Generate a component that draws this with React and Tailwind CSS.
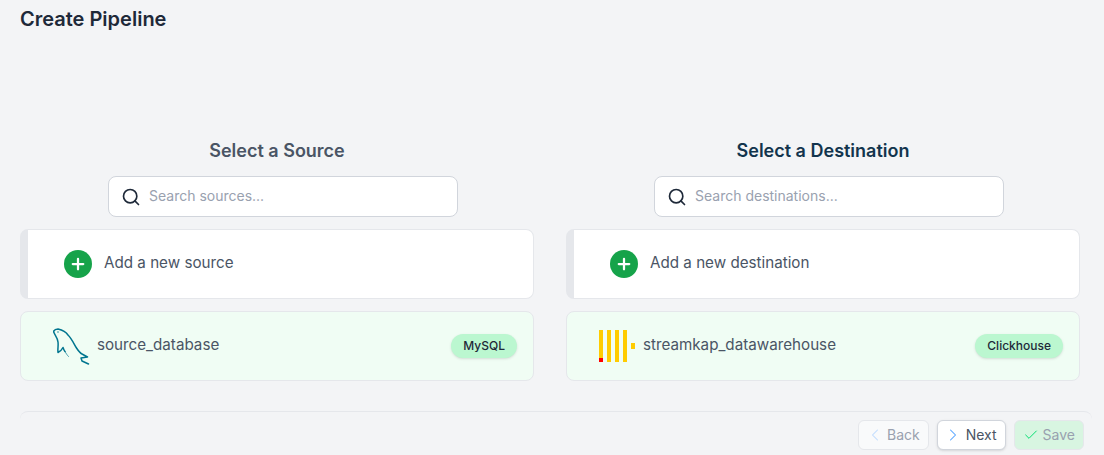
import React from 'react';
import { Search, Plus, ChevronLeft, ChevronRight, Check } from 'lucide-react';

const MysqlIcon = () => (
  <svg width="38" height="38" viewBox="0 0 38 38" fill="none" stroke="#00758f" strokeLinecap="round" strokeLinejoin="round">
    <path strokeWidth="1.5" d="M0.500 4.500C1.500 2.500 3 2 5 2c4 1 8 3 10 6 4 4 6.500 10 8.500 13 2 3 3.500 5 5.500 6l5.500 3-6.500 1 1 3 6.500 3" />
    <path strokeWidth="1.500" d="M0.500 4.500c1 3.500 4 5.500 4.500 10.500.5 4-.5 7 0 10.500 2-1 4-3 5-5 .5 1.500 1 3 2 4" />
    <path strokeWidth="0.700" d="M12 24.500c1 2 2.500 4 3.500 5" />
    <circle cx="5" cy="5" r="0.700" fill="#00758f" stroke="none" />
  </svg>
);

const ClickhouseIcon = () => (
  <svg width="38" height="32" viewBox="0 0 38 32" className="block">
    <rect x="0" y="0" width="4" height="32" fill="#fc0" />
    <rect x="8" y="0" width="4" height="32" fill="#fc0" />
    <rect x="16" y="0" width="4" height="32" fill="#fc0" />
    <rect x="24" y="0" width="4" height="32" fill="#fc0" />
    <rect x="32" y="13" width="4" height="6" fill="#fc0" />
    <rect x="0" y="28" width="4" height="4" fill="#f00" />
  </svg>
);

const Column = ({ title, titleClass, placeholder, addLabel, name, badge, icon }) => (
  <div className="flex-1 min-w-0">
    <h2 className={`text-center text-lg leading-7 font-semibold pt-px ${titleClass}`}>{title}</h2>
    <div className="flex justify-center mt-[11px] pl-3">
      <div className="w-[350px] h-[41px] flex items-center bg-white border border-gray-300 rounded-lg pl-3">
        <Search size={20} strokeWidth={2} className="text-gray-800" />
        <span className="ml-2 mb-px text-sm text-gray-400">{placeholder}</span>
      </div>
    </div>
    <div className="mt-3 h-[70px] flex items-center bg-white border border-gray-200 border-l-8 rounded-lg pl-9">
      <span className="w-[28px] h-[28px] rounded-full bg-[#16a34a] flex items-center justify-center">
        <Plus size={18} strokeWidth={3} className="text-white" />
      </span>
      <span className="ml-3 mb-px text-[15.2px] text-gray-600">{addLabel}</span>
    </div>
    <div className="mt-3 h-[70px] flex items-center justify-between bg-green-50 border border-gray-200 rounded-lg pl-8 pr-4">
      <div className="flex items-center gap-[6px]">
        {icon}
        <span className="mb-px text-[15.2px] text-gray-600">{name}</span>
      </div>
      <span className="h-[24px] px-3 flex items-center rounded-full bg-[#bbf7d0] text-xs font-medium text-gray-800 shadow-sm">{badge}</span>
    </div>
  </div>
);

export default function App() {
  return (
    <div className="w-[1104px] h-[455px] overflow-hidden bg-gray-100 font-['Inter',sans-serif] flex flex-col">
      <h1 className="pl-5 pt-[5px] text-xl leading-7 font-semibold text-gray-800">Create Pipeline</h1>
      <div className="flex gap-8 pl-5 pr-6 mt-[103px]">
        <Column
          title="Select a Source"
          titleClass="text-gray-600"
          placeholder="Search sources..."
          addLabel="Add a new source"
          name="source_database"
          badge="MySQL"
          icon={<MysqlIcon />}
        />
        <Column
          title="Select a Destination"
          titleClass="text-[#12344d]"
          placeholder="Search destinations..."
          addLabel="Add a new destination"
          name="streamkap_datawarehouse"
          badge="Clickhouse"
          icon={<ClickhouseIcon />}
        />
      </div>
      <div className="mt-[30px] ml-5 mr-3 border-t border-gray-200 rounded-t-lg flex justify-end gap-2 pt-2 pr-2">
        <button className="h-[30px] pl-[6px] pr-2 flex items-center gap-[2px] bg-gray-50 border border-gray-200 rounded-md text-sm text-gray-400">
          <ChevronLeft size={20} strokeWidth={1.25} className="text-blue-200" />
          Back
        </button>
        <button className="h-[30px] pl-[5px] pr-2 flex items-center gap-[3px] bg-white border border-gray-300 rounded-md text-sm text-gray-600 shadow-sm">
          <ChevronRight size={20} strokeWidth={1.25} className="text-blue-400" />
          Next
        </button>
        <button className="h-[30px] pl-2 pr-2 flex items-center gap-1 bg-[#d8f5e1] border border-gray-200 rounded-md text-sm text-gray-400">
          <Check size={16} strokeWidth={1.5} className="text-green-400" />
          Save
        </button>
      </div>
    </div>
  );
}
